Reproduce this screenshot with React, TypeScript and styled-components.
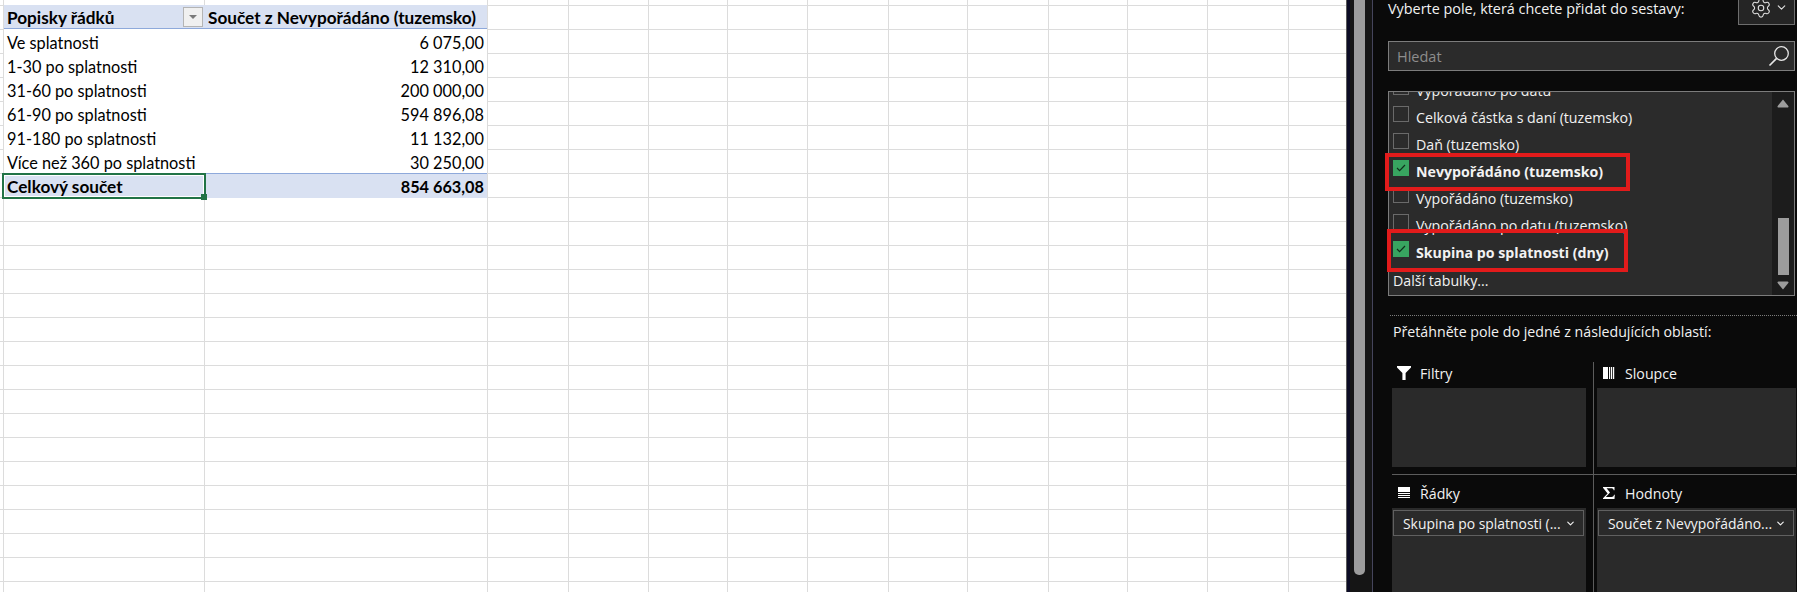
import { createGlobalStyle } from "styled-components";
import styled from "styled-components";
import { ChevronDown, Settings } from "lucide-react";

const GlobalStyle = createGlobalStyle`
    html, body {
        margin: 0;
        padding: 0;
        background: #ffffff;
    }
    * {
        box-sizing: border-box;
    }
`;

const PANEL_FONT = `"Open Sans", "Noto Sans", sans-serif`;
const SHEET_FONT = `"Lato", "Liberation Sans", sans-serif`;

const Window = styled.div`
    display: flex;
    width: 1797px;
    height: 592px;
    overflow: hidden;
`;

/* ---------- spreadsheet ---------- */

const Sheet = styled.div`
    position: relative;
    display: grid;
    grid-template-columns: 4px 201px 283px 81px 80px 79px 80px 81px 79px 81px 79px 80px 81px 58px;
    grid-template-rows: 6px;
    grid-auto-rows: 24px;
    flex: none;
    width: 1346px;
    height: 592px;
    overflow: hidden;
    background: #ffffff;
`;

const GridCell = styled.div`
    border-right: 1px solid #dcdcdc;
    border-bottom: 1px solid #dcdcdc;
`;

const PivotTable = styled.div`
    position: absolute;
    top: 5px;
    left: 4px;
    width: 483px;
    background: #ffffff;
    color: #000000;
    font-family: ${SHEET_FONT};
    font-size: 16.3px;
    line-height: 20px;
`;

const PivotRow = styled.div<{ $kind?: "head" | "total" }>`
    display: flex;
    align-items: flex-end;
    height: ${(p) => (p.$kind === "total" ? "25px" : "24px")};
    padding-bottom: ${(p) => (p.$kind === "total" ? "1px" : "0")};
    font-size: ${(p) => (p.$kind ? "17.2px" : "16.3px")};
    font-weight: ${(p) => (p.$kind ? 700 : 400)};
    background: ${(p) => (p.$kind ? "#d9e1f2" : "#ffffff")};
    border-bottom: ${(p) => (p.$kind === "head" ? "1px solid #8ea9db" : "none")};
    border-top: ${(p) => (p.$kind === "total" ? "1px solid #8ea9db" : "none")};
`;

const LabelCell = styled.div`
    position: relative;
    flex: none;
    width: 200px;
    padding-left: 3px;
    white-space: nowrap;
`;

const ValueCell = styled.div<{ $left?: boolean }>`
    flex: 1;
    padding: ${(p) => (p.$left ? "0 0 0 4px" : "0 3px 0 0")};
    font-size: ${(p) => (p.$left ? "inherit" : "16.3px")};
    text-align: ${(p) => (p.$left ? "left" : "right")};
    white-space: nowrap;
`;

const FilterButton = styled.div`
    position: absolute;
    top: -1px;
    right: 1px;
    display: flex;
    align-items: center;
    justify-content: center;
    width: 20px;
    height: 20px;
    background: #f0f0f0;
    border: 1px solid #b4b4b4;
`;

const FilterCaret = styled.div`
    width: 0;
    height: 0;
    border-left: 4px solid transparent;
    border-right: 4px solid transparent;
    border-top: 4px solid #7a7a7a;
`;

const Selection = styled.div`
    position: absolute;
    top: 168px;
    left: -2px;
    width: 204px;
    height: 26px;
    border: 2px solid #217346;
    box-shadow: inset 0 0 0 1px #ffffff;
    pointer-events: none;

    &::after {
        content: "";
        position: absolute;
        right: -3px;
        bottom: -3px;
        width: 6px;
        height: 6px;
        background: #217346;
    }
`;

/* ---------- strip between the sheet and the task pane ---------- */

const Gutter = styled.div`
    flex: none;
    width: 27px;
    height: 100%;
    padding-left: 7px;
    background: #151515;
    border-left: 1px solid #5a5a5a;
    border-right: 1px solid #45455c;
    box-shadow: inset 3px 0 0 #0c0c26;
`;

const GutterThumb = styled.div`
    width: 11px;
    height: 575px;
    background: #9c9c9c;
    border-radius: 0 0 5px 5px;
`;

/* ---------- pivot fields pane ---------- */

const Panel = styled.div`
    flex: 1;
    min-width: 0;
    height: 100%;
    overflow: hidden;
    padding-left: 15px;
    background: #0a0a0a;
    color: #f2f2f2;
    font-family: ${PANEL_FONT};
    font-size: 14.2px;
`;

const PanelHeader = styled.div`
    display: flex;
    align-items: flex-start;
    justify-content: space-between;
    height: 41px;
    padding-right: 2px;
`;

const HeaderLabel = styled.div`
    padding-top: 1px;
    font-size: 14.4px;
    line-height: 16px;
    white-space: nowrap;
`;

const ToolsButton = styled.div`
    display: flex;
    align-items: center;
    justify-content: space-between;
    width: 57px;
    height: 25px;
    padding: 0 6px 9px 11px;
    background: #252525;
    border: 1px solid #6e6e6e;
    border-top: none;
    color: #e0e0e0;
`;

const SearchBox = styled.div`
    display: flex;
    align-items: center;
    justify-content: space-between;
    width: 407px;
    height: 30px;
    padding: 0 4px 0 8px;
    background: #2b2b2b;
    border: 1px solid #7c7c7c;
    color: #8d8d8d;
    font-size: 14.5px;
`;

const ListBox = styled.div`
    position: relative;
    width: 407px;
    height: 205px;
    margin-top: 20px;
    background: #2b2b2b;
    border: 1px solid #7c7c7c;
`;

const ListViewport = styled.div`
    display: flex;
    height: 100%;
    overflow: hidden;
`;

const FieldList = styled.div`
    flex: 1;
    min-width: 0;
    margin-top: -15px;
    padding-left: 4px;
`;

const FieldRow = styled.div`
    display: flex;
    align-items: center;
    height: 27px;
    gap: 7px;
`;

const Checkbox = styled.div<{ $checked?: boolean }>`
    display: flex;
    align-items: center;
    justify-content: center;
    flex: none;
    width: 16px;
    height: 16px;
    margin-top: -7px;
    background: ${(p) => (p.$checked ? "#38a560" : "transparent")};
    border: ${(p) => (p.$checked ? "none" : "1px solid #6a6a6a")};
`;

const FieldName = styled.span<{ $bold?: boolean }>`
    font-weight: ${(p) => (p.$bold ? 700 : 400)};
    white-space: nowrap;
`;

const MoreTables = styled.div`
    height: 29px;
    line-height: 30px;
`;

const ListScroll = styled.div`
    display: flex;
    flex: none;
    flex-direction: column;
    align-items: center;
    justify-content: space-between;
    width: 22px;
    padding: 7px 0 5px;
    background: #1c1c1c;
`;

const ListThumb = styled.div`
    width: 11px;
    height: 57px;
    margin-top: auto;
    margin-bottom: 6px;
    background: #9c9c9c;
`;

const Highlight = styled.div<{ $top: number; $left: number; $width: number; $height: number }>`
    position: absolute;
    top: ${(p) => p.$top}px;
    left: ${(p) => p.$left}px;
    width: ${(p) => p.$width}px;
    height: ${(p) => p.$height}px;
    border: 4px solid #e21b1b;
`;

const Divider = styled.div`
    width: 407px;
    margin: 19px 0 0 2px;
    border-top: 1px dotted #7c7c7c;
`;

const DragHint = styled.div`
    margin: 6px 0 0 5px;
    line-height: 20px;
    white-space: nowrap;
`;

const AreaGrid = styled.div`
    display: grid;
    grid-template-columns: 201px 203px;
    grid-template-rows: 113px 118px;
    margin: 20px 0 0 4px;
`;

const Area = styled.div<{ $right?: boolean; $top?: boolean }>`
    display: flex;
    flex-direction: column;
    padding-right: ${(p) => (p.$right ? "0" : "7px")};
    padding-left: ${(p) => (p.$right ? "3px" : "0")};
    border-left: ${(p) => (p.$right ? "1px solid #5c5c5c" : "none")};
    border-bottom: ${(p) => (p.$top ? "1px solid #5c5c5c" : "none")};
    padding-bottom: ${(p) => (p.$top ? "7px" : "0")};
`;

const AreaTitle = styled.div<{ $top?: boolean }>`
    display: flex;
    align-items: center;
    flex: none;
    gap: 9px;
    height: ${(p) => (p.$top ? "26px" : "33px")};
    padding: ${(p) => (p.$top ? "0 0 3px 5px" : "4px 0 0 5px")};
`;

const AreaIcon = styled.svg`
    flex: none;
    width: 14px;
    height: 14px;
    margin-top: -2px;
    fill: #ffffff;
`;

const AreaBody = styled.div`
    flex: 1;
    padding: 2px 2px 0 1px;
    background: #2a2a2a;
`;

const FieldPill = styled.div`
    display: flex;
    align-items: center;
    justify-content: space-between;
    height: 26px;
    padding: 0 7px 0 9px;
    border: 1px solid #606060;
    font-size: 13.9px;
    white-space: nowrap;
`;

function Arrow({ down }: { down?: boolean }) {
    return (
        <svg width="12" height="9" viewBox="0 0 12 9" fill="#9c9c9c">
            {down ? <path d="M1.5 0.5h9a1 1 0 0 1 .8 1.6L6 8.5 .7 2.1a1 1 0 0 1 .8-1.6z" /> : <path d="M6 .5l5.3 6.4a1 1 0 0 1-.8 1.6h-9a1 1 0 0 1-.8-1.6z" />}
        </svg>
    );
}

function CheckMark() {
    return (
        <svg width="10" height="8" viewBox="0 0 10 8" fill="none" stroke="#10301c" strokeWidth="1.2">
            <path d="M1 4l2.6 2.6L9 1" />
        </svg>
    );
}

function SearchIcon() {
    return (
        <svg width="22" height="22" viewBox="0 0 22 22" fill="none" stroke="#e6e6e6" strokeWidth="1.3">
            <circle cx="13.5" cy="8.5" r="6.8" />
            <path d="M8.6 13.4L1.5 20.5" strokeWidth="1.7" />
        </svg>
    );
}

const pivotRows = [
    ["Ve splatnosti", "6 075,00"],
    ["1-30 po splatnosti", "12 310,00"],
    ["31-60 po splatnosti", "200 000,00"],
    ["61-90 po splatnosti", "594 896,08"],
    ["91-180 po splatnosti", "11 132,00"],
    ["Více než 360 po splatnosti", "30 250,00"],
];

const fields = [
    { name: "Vypořádáno po datu" },
    { name: "Celková částka s daní (tuzemsko)" },
    { name: "Daň (tuzemsko)" },
    { name: "Nevypořádáno (tuzemsko)", checked: true },
    { name: "Vypořádáno (tuzemsko)" },
    { name: "Vypořádáno po datu (tuzemsko)" },
    { name: "Skupina po splatnosti (dny)", checked: true },
];

export default function App() {
    return (
        <Window>
            <GlobalStyle />
            <Sheet>
                {Array.from({ length: 14 * 26 }, (_, i) => (
                    <GridCell key={i} />
                ))}
                <PivotTable>
                    <PivotRow $kind="head">
                        <LabelCell>
                            Popisky řádků
                            <FilterButton>
                                <FilterCaret />
                            </FilterButton>
                        </LabelCell>
                        <ValueCell $left>Součet z Nevypořádáno (tuzemsko)</ValueCell>
                    </PivotRow>
                    {pivotRows.map(([label, value]) => (
                        <PivotRow key={label}>
                            <LabelCell>{label}</LabelCell>
                            <ValueCell>{value}</ValueCell>
                        </PivotRow>
                    ))}
                    <PivotRow $kind="total">
                        <LabelCell>Celkový součet</LabelCell>
                        <ValueCell>854 663,08</ValueCell>
                    </PivotRow>
                    <Selection />
                </PivotTable>
            </Sheet>
            <Gutter>
                <GutterThumb />
            </Gutter>
            <Panel>
                <PanelHeader>
                    <HeaderLabel>Vyberte pole, která chcete přidat do sestavy:</HeaderLabel>
                    <ToolsButton>
                        <Settings size={22} strokeWidth={1.2} />
                        <ChevronDown size={13} strokeWidth={2} />
                    </ToolsButton>
                </PanelHeader>
                <SearchBox>
                    Hledat
                    <SearchIcon />
                </SearchBox>
                <ListBox>
                    <ListViewport>
                        <FieldList>
                            {fields.map((f) => (
                                <FieldRow key={f.name}>
                                    <Checkbox $checked={f.checked}>{f.checked && <CheckMark />}</Checkbox>
                                    <FieldName $bold={f.checked}>{f.name}</FieldName>
                                </FieldRow>
                            ))}
                            <MoreTables>Další tabulky...</MoreTables>
                        </FieldList>
                        <ListScroll>
                            <Arrow />
                            <ListThumb />
                            <Arrow down />
                        </ListScroll>
                    </ListViewport>
                    <Highlight $top={61} $left={-4} $width={245} $height={38} />
                    <Highlight $top={137} $left={-2} $width={241} $height={43} />
                </ListBox>
                <Divider />
                <DragHint>Přetáhněte pole do jedné z následujících oblastí:</DragHint>
                <AreaGrid>
                    <Area $top>
                        <AreaTitle $top>
                            <AreaIcon viewBox="0 0 14 14">
                                <path d="M0 0h14v1.5L8.6 7v7H5.4V7L0 1.5z" />
                            </AreaIcon>
                            Filtry
                        </AreaTitle>
                        <AreaBody />
                    </Area>
                    <Area $top $right>
                        <AreaTitle $top>
                            <AreaIcon viewBox="0 0 14 14">
                                <path d="M1 1h5v12H1zM7 1h1.2v12H7zM9 1h1.2v12H9zM11 1h1.2v12H11z" />
                            </AreaIcon>
                            Sloupce
                        </AreaTitle>
                        <AreaBody />
                    </Area>
                    <Area>
                        <AreaTitle>
                            <AreaIcon viewBox="0 0 14 14">
                                <path d="M1 1h12v5H1zM1 7h12v1.1H1zM1 9h12v1.1H1zM1 11h12v1.1H1z" />
                            </AreaIcon>
                            Řádky
                        </AreaTitle>
                        <AreaBody>
                            <FieldPill>
                                Skupina po splatnosti (...
                                <ChevronDown size={11} strokeWidth={2.5} />
                            </FieldPill>
                        </AreaBody>
                    </Area>
                    <Area $right>
                        <AreaTitle>
                            <AreaIcon viewBox="0 0 14 14">
                                <path d="M1 1h11.5v3.2h-.8C11.4 2.8 10.6 2.2 9 2.2H4.6L8 6.6 3.8 11h5.6c1.5 0 2.3-.7 2.6-2.2h.8L12.5 13H1v-.7L5.6 7.4 1 1.7z" />
                            </AreaIcon>
                            Hodnoty
                        </AreaTitle>
                        <AreaBody>
                            <FieldPill>
                                Součet z Nevypořádáno...
                                <ChevronDown size={11} strokeWidth={2.5} />
                            </FieldPill>
                        </AreaBody>
                    </Area>
                </AreaGrid>
            </Panel>
        </Window>
    );
}
